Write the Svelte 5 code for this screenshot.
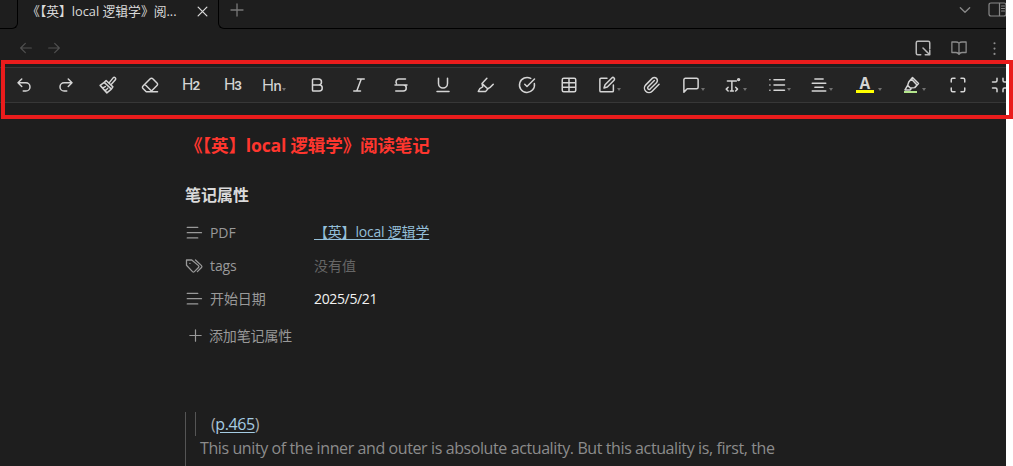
<script>
  const tools = [
    { d: 'M9 14 4 9l5-5M4 9h10.500a5.500 5.500 0 0 1 0 11H11' },
    { d: 'm15 14 5-5-5-5M20 9H9.500a5.500 5.500 0 0 0 0 11H13' },
    { d: 'm14 8.500 4.800-6a1.900 1.900 0 0 1 3 2.600L16.500 11M9.500 6l9 8.500-2 3-9.500-9zM7 8.500 1.500 12.500 10.500 22.500l6-5M4.500 15.500c2 0 3-.5 4-1.500M7.500 19c2 0 3-1 4-2.500' },
    { d: 'm7 21-4.300-4.300c-1-1-1-2.500 0-3.400l9.600-9.600c1-1 2.500-1 3.400 0l5.600 5.600c1 1 1 2.500 0 3.400L13 21M22 21H7M5 11l9 9' },
    { h: '2' },
    { h: '3' },
    { h: 'n', arrow: true },
    { d: 'M6 12h9a4 4 0 0 1 0 8H7a1 1 0 0 1-1-1V5a1 1 0 0 1 1-1h7a4 4 0 0 1 0 8' },
    { d: 'M19 4h-9M14 20H5M15 4 9 20' },
    { d: 'M18 4H9a3.800 3.800 0 0 0-3 6M4 12h16M15 12a4 4 0 0 1 0 8H5' },
    { d: 'M6 3v7a6 6 0 0 0 12 0V3M4 20.500h16' },
    { d: 'M14.500 3 8 10l1 4.500c-3 1-5 3-6 6h10l3-3.500M8.500 10.500l7 6.500c3-1 5-3 7.500-6' },
    { d: 'M21.800 10A10 10 0 1 1 17 3.300M9 11l3 3L22 4' },
    { d: 'M12 3v18M3 9h18M3 15h18M5 3h14a2 2 0 0 1 2 2v14a2 2 0 0 1-2 2H5a2 2 0 0 1-2-2V5a2 2 0 0 1 2-2' },
    { d: 'M12 3H4a1.500 1.500 0 0 0-1.500 1.500v15A1.500 1.500 0 0 0 4 21h15a1.500 1.500 0 0 0 1.500-1.500V12M18.400 2.600a2.100 2.100 0 0 1 3 3l-9 9-4.400 1.400 1.400-4.400z', arrow: true },
    { d: 'm21.400 11.100-9.200 9.200a6 6 0 0 1-8.500-8.500l8.600-8.600a4 4 0 1 1 5.700 5.700l-8.600 8.500a2 2 0 0 1-2.800-2.800l8.500-8.500' },
    { d: 'M21.500 15a2 2 0 0 1-2 2H7l-4.500 4.500V5a2 2 0 0 1 2-2h15a2 2 0 0 1 2 2z', arrow: true },
    { d: 'M4.500 6.500h12M10.500 6.500V20M8.500 20h4M5.500 15l-2.500 2.500L5.500 20M15.500 15l2.500 2.500-2.500 2.500M19.500 3.500a1.300 1.300 0 1 0 1.300 1.300 1.300 1.300 0 0 0-1.300-1.300', arrow: true },
    { d: 'M8 5h14M8 12h14M8 19h14M2.500 5h.1M2.500 12h.1M2.500 19h.1', arrow: true, near: true },
    { d: 'M6.500 4h11M3 9.500h18M6.500 15h11M3 20h18', arrow: true, near: true },
    { color: 'text' },
    { color: 'mark', d: 'M9 8 14 2l8 8-5 5.500-6 .5-3.500-3.500zM7.500 12.500 4 18.500h7l2-2.500M12.500 4l7.500 8' },
    { d: 'M8 3H5a2 2 0 0 0-2 2v3M16 3h3a2 2 0 0 1 2 2v3M21 16v3a2 2 0 0 1-2 2h-3M3 16v3a2 2 0 0 0 2 2h3' },
    { d: 'M8 3v3a2 2 0 0 1-2 2H2M22 8h-4a2 2 0 0 1-2-2V3M2 16h4a2 2 0 0 1 2 2v3M16 21v-3a2 2 0 0 1 2-2h4' }
  ];
  const lines = 'M3 4.500h14M3 11.500h19M3 18.500h14';
  const props = [
    { icon: lines, name: 'PDF', value: '【英】local 逻辑学', kind: 'link' },
    { icon: 'M9 4H2v7l8 8.500a1.800 1.800 0 0 0 2.500 0l5.500-5.500a1.800 1.800 0 0 0 0-2.500zM14 4l8 7.500a1.800 1.800 0 0 1 0 2.500l-5.500 5.500M6.500 8.500h.1', name: 'tags', value: '没有值', kind: 'empty' },
    { icon: lines, name: '开始日期', value: '2025/5/21', kind: 'date' }
  ];
</script>

{#snippet icon(d, size, width = 2)}
  <svg class="icon" width={size} height={size} viewBox="0 0 24 24" stroke-width={width}><path {d} /></svg>
{/snippet}

<div class="screen">
  <div class="app">
    <header class="tabs">
      <div class="prev"></div>
      <div class="tab">
        <span class="tab-title">《【英】local 逻辑学》阅...</span>
        {@render icon('M5 5l14 14M19 5 5 19', 15, 2)}
      </div>
      <div class="rest">
        <span class="new">{@render icon('M12 3v18M3 12h18', 16, 2)}</span>
        <span class="chev">{@render icon('m5 8.500 7 7 7-7', 16, 2)}</span>
        <svg class="icon" width="19" height="15" viewBox="0 0 19 15" stroke-width="1.2"><path d="M3 1h13q2 0 2 2v9q0 2-2 2H3q-2 0-2-2V3q0-2 2-2M11.500 1v13M13.500 4h3M13.500 6.500h3M13.500 9h3" /></svg>
      </div>
    </header>
    <nav>
      {@render icon('M20 12H4M11 5l-7 7 7 7', 16, 1.8)}
      {@render icon('M4 12h16M13 5l7 7-7 7', 16, 1.8)}
      <span class="grow"></span>
      <span class="bright">{@render icon('M9 21H5a2 2 0 0 1-2-2V5a2 2 0 0 1 2-2h14a2 2 0 0 1 2 2v8M12 12l9 9M21 15v6h-6', 18, 2)}</span>
      {@render icon('M12 5.500v15M12 5.500c-1-1-2-1.500-4-1.500H2.500v14H8c2 0 3 .5 4 2.500 1-2 2-2.500 4-2.500h5.500V4H16c-2 0-3 .5-4 1.500', 18, 1.7)}
      {@render icon('M12 4.500v.1M12 12v.1M12 19.500v.1', 17, 3)}
    </nav>
    <div class="toolbar">
      {#each tools as t}
        <div class="tool" class:wide={t.color} class:marker={t.color === 'mark'} class:drop={t.arrow} class:near={t.near}>
          {#if t.h}
            <span class="head" class:any={t.arrow}>H<b>{t.h}</b></span>
          {:else if t.color === 'text'}
            <span class="letter">A</span>
          {:else if t.color === 'mark'}
            <span class="mark">{@render icon(t.d, 18)}</span>
          {:else}
            {@render icon(t.d, 18)}
          {/if}
          {#if t.arrow || t.color}<i></i>{/if}
        </div>
      {/each}
    </div>
    <main>
      <h1>《【英】local 逻辑学》阅读笔记</h1>
      <h2>笔记属性</h2>
      {#each props as p}
        <div class="prop">
          {@render icon(p.icon, 18, 1.7)}
          <span class="name">{p.name}</span>
          <span class={p.kind}>{p.value}</span>
        </div>
      {/each}
      <div class="add">{@render icon('M12 4v16M4 12h16', 17, 1.7)}<span>添加笔记属性</span></div>
      <blockquote>
        <div class="inner">(<a href="#p465">p.465</a>)</div>
        <p>This unity of the inner and outer is absolute actuality. But this actuality is, first, the</p>
      </blockquote>
    </main>
  </div>
  <div class="frame"></div>
</div>

<style>
  :global(body) { background: #fff; }
  .screen { position: relative; width: 1013px; height: 466px; overflow: hidden; background: #fff; }
  .app { width: 1006px; height: 466px; overflow: hidden; background: #1e1e1e; color: #dadada; font-family: "Open Sans", "Noto Sans CJK SC", sans-serif; }
  .icon { flex: none; display: block; fill: none; stroke: currentColor; stroke-linecap: round; stroke-linejoin: round; overflow: visible; }
  .tabs { display: flex; height: 29px; }
  .prev, .rest, .tab { box-sizing: border-box; border: 0 solid #000; }
  .prev { width: 18px; border-width: 0 1px 1px 0; border-bottom-right-radius: 6px; }
  .tab { width: 200px; display: flex; align-items: center; justify-content: space-between; padding: 0 8.500px 7px 9px; }
  .tab-title { font-size: 12.8px; white-space: nowrap; line-height: 20px; }
  .rest { flex: 1; display: flex; align-items: center; border-width: 0 0 1px 1px; border-bottom-left-radius: 6px; padding: 0 0 9px 10px; color: #888; }
  .new { flex: 1; color: #777; }
  .chev { margin-right: 15px; }
  .rest > .icon { margin-right: -1px; }
  nav { display: flex; align-items: center; height: 38px; box-sizing: border-box; padding: 0 3px 0 18px; gap: 12px; color: #505050; }
  .grow { flex: 1; }
  .grow ~ * { color: #8c8c8c; margin-left: 6px; }
  nav .bright { color: #b9b9b9; }
  .toolbar { display: flex; height: 36px; box-sizing: border-box; border: solid #373737; border-width: 1px 0; background: #242424; padding-left: 3px; color: #d5d5d5; }
  .tool { flex: none; width: 41.900px; display: flex; align-items: center; justify-content: center; position: relative; }
  .tool.wide { width: 48px; }
  .drop { padding-right: 6px; box-sizing: border-box; }
  .near { padding-right: 1px; }
  .tool i { position: absolute; right: 10px; top: 20px; border: 2.500px solid transparent; border-top: 3px solid #707070; border-bottom: 0; }
  .near i { right: 7.500px; }
  .wide i { right: 6.500px; }
  .marker i { right: 11px; }
  .head { display: block; width: 19px; font: 400 17px/18px "Open Sans", sans-serif; letter-spacing: -2px; white-space: nowrap; }
  .head b { font-size: 13.500px; font-weight: 600; letter-spacing: 0; margin-left: 1px; }
  .head.any { width: 21px; }
  .head:not(.any) { font-family: Roboto, sans-serif; font-size: 16px; letter-spacing: -2px; }
  .letter { width: 18px; height: 17px; border-bottom: 3px solid #ff0; text-align: center; font: bold 15.500px/14px "Open Sans", sans-serif; box-sizing: border-box; margin-bottom: 1px; }
  .mark { border-bottom: 2px solid #b3e58c; width: 13px; height: 17px; box-sizing: border-box; margin-right: 5px; margin-top: -1px; }
  .mark .icon { margin-left: -2px; }
  main { padding-left: 185px; }
  h1 { margin: 0; padding-top: 28px; font-size: 17.600px; line-height: 28px; letter-spacing: -.2px; color: #ff362e; font-weight: 700; white-space: nowrap; }
  h2 { margin: 22px 0 7px; font-size: 16px; line-height: 28px; font-weight: 600; color: #dadada; }
  .prop { display: flex; align-items: center; height: 33.300px; font-size: 14px; line-height: 20px; color: #999; white-space: nowrap; }
  .prop .icon { margin-left: -.5px; }
  .name { width: 104px; margin-left: 7.500px; letter-spacing: -.1px; }
  .link { color: #94bfd9; text-decoration: underline; text-underline-offset: 2px; letter-spacing: -.2px; margin-top: -1px; }
  .empty { color: #666; }
  .date { color: #f2f2f2; letter-spacing: -.35px; margin-top: -1px; }
  .add { display: flex; align-items: center; gap: 5px; height: 34px; margin-top: 3px; padding-left: 2px; font-size: 14px; line-height: 20px; letter-spacing: -.15px; color: #999; }
  blockquote { margin: 59px 0 0; border-left: 1px solid #555; height: 60px; box-sizing: border-box; padding-left: 9px; font-size: 16px; color: #8c8c8c; }
  .inner { border-left: 1px solid #555; height: 24px; line-height: 25px; padding-left: 15px; color: #aaa; letter-spacing: -.4px; }
  .inner a { color: #a5cce2; text-underline-offset: 2px; }
  p { margin: 0 0 0 5px; line-height: 25px; white-space: nowrap; letter-spacing: -.4px; }
  .frame { position: absolute; left: 1px; top: 60px; width: 1012px; height: 59px; box-sizing: border-box; border: 4px solid #ea1c1c; }
</style>
